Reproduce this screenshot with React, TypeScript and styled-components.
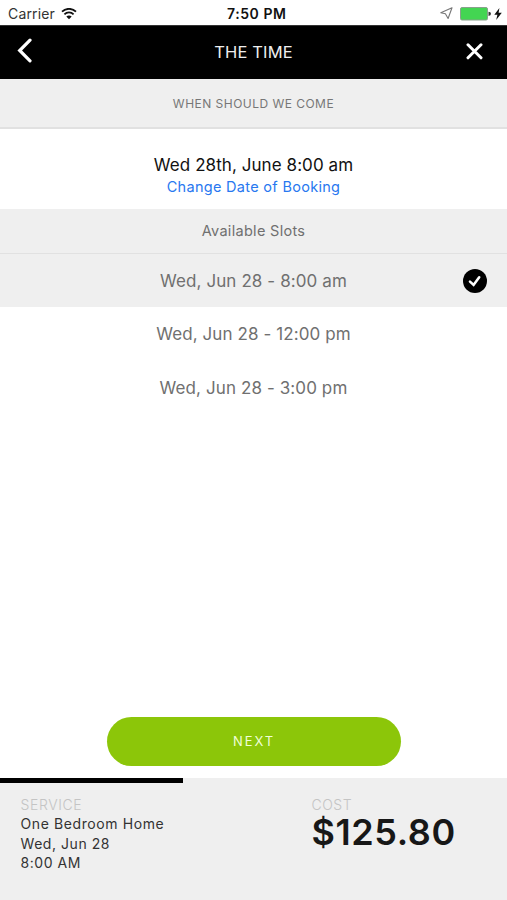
import React from "react";
import styled, { createGlobalStyle } from "styled-components";

const GlobalStyle = createGlobalStyle`
  * { box-sizing: border-box; }
  body { margin: 0; background: #fff; font-family: Inter, "Liberation Sans", sans-serif; }
`;

const Screen = styled.div`
  width: 507px;
  height: 900px;
  display: flex;
  flex-direction: column;
  overflow: hidden;
  background: #fff;
`;

const Text = styled.span<{ $size: number; $track?: number; $color?: string; $weight?: number; $line?: number }>`
  font-size: ${(p) => p.$size}px;
  letter-spacing: ${(p) => p.$track ?? 0}px;
  color: ${(p) => p.$color ?? "#111"};
  font-weight: ${(p) => p.$weight ?? 400};
  line-height: ${(p) => (p.$line ? `${p.$line}px` : "normal")};
  white-space: nowrap;
`;

const StatusBar = styled.header`
  height: 25px;
  padding: 2px 5px 0 8px;
  display: grid;
  grid-template-columns: 219px 1fr 180px;
  align-items: center;
`;

const StatusGroup = styled.div<{ $end?: boolean }>`
  display: flex;
  align-items: center;
  gap: 6px;
  justify-content: ${(p) => (p.$end ? "flex-end" : "flex-start")};
`;

const NavBar = styled.nav`
  height: 54px;
  background: #000;
  border-top: 1px solid #333;
  padding: 0 24px 1px 17px;
  display: grid;
  grid-template-columns: 60px 1fr 53px;
  align-items: center;
  text-align: center;
`;

const IconButton = styled.button<{ $end?: boolean }>`
  display: flex;
  justify-content: ${(p) => (p.$end ? "flex-end" : "flex-start")};
  padding: 0 0 ${(p) => (p.$end ? 2 : 4)}px;
  border: 0;
  background: none;
`;

const Heading = styled.div<{ $height: number; $rule: number; $shift?: number }>`
  height: ${(p) => p.$height}px;
  padding-bottom: ${(p) => p.$shift ?? 0}px;
  background: #efefef;
  border-bottom: ${(p) => p.$rule}px solid #e1e1e1;
  display: flex;
  align-items: center;
  justify-content: center;
`;

const Booking = styled.section`
  height: 80px;
  padding-top: 25px;
  display: flex;
  flex-direction: column;
  align-items: center;
`;

const SlotRow = styled.div<{ $selected?: boolean }>`
  height: ${(p) => (p.$selected ? 53 : 54)}px;
  padding: 0 19px;
  display: grid;
  grid-template-columns: 26px 1fr 26px;
  align-items: center;
  text-align: center;
  background: ${(p) => (p.$selected ? "#efefef" : "#fff")};
`;

const Actions = styled.div`
  margin-top: auto;
  padding-bottom: 12px;
  display: flex;
  justify-content: center;
`;

const NextButton = styled.button`
  width: 294px;
  height: 49px;
  border: 0;
  border-radius: 25px;
  padding: 0 0 1px 1px;
  background: #8cc609;
  font-family: inherit;
`;

const Footer = styled.footer`
  height: 122px;
  background: #efefef;
`;

const Progress = styled.div`
  width: 183px;
  height: 5px;
  background: #000;
`;

const Summary = styled.div`
  padding: 12px 20.5px 0;
  display: grid;
  grid-template-columns: 291px 1fr;
`;

const SummaryColumn = styled.div`
  display: flex;
  flex-direction: column;
`;

const slots = ["Wed, Jun 28 - 8:00 am", "Wed, Jun 28 - 12:00 pm", "Wed, Jun 28 - 3:00 pm"];

const Wifi = () => (
  <svg width="16" height="12" viewBox="0 0 16 12" fill="none" stroke="#111" strokeWidth="1.8">
    <path d="M1 3.6C5 -.1 11 -.1 15 3.6M3.4 6.3C6 3.8 10 3.8 12.6 6.3" />
    <path d="M8 11.2L5.3 8.5Q8 6.5 10.7 8.5Z" fill="#111" stroke="none" />
  </svg>
);

const Location = () => (
  <svg width="13" height="13" viewBox="0 0 13 13" fill="none" stroke="#777" strokeWidth="1.1" strokeLinejoin="round">
    <path d="M12 .8L.8 5.8L5.4 6.8L8.1 11.5Z" />
  </svg>
);

const Battery = () => (
  <svg width="31" height="14" viewBox="0 0 31 14">
    <rect x=".5" y=".5" width="27" height="12.5" rx="1.5" fill="#43d552" stroke="#88a18b" />
    <path d="M28.5 4.7Q31 4.7 31 6.8Q31 8.9 28.5 8.9Z" fill="#333" />
  </svg>
);

const Bolt = () => (
  <svg width="8" height="12" viewBox="0 0 8 12">
    <path d="M5.4 0L.3 6.7H3.4L2.2 12L7.8 4.8H4.6Z" fill="#111" />
  </svg>
);

const EndIcons = styled(StatusGroup)`
  gap: 3px;
  & > svg:first-child { margin-right: 4px; }
`;

const Back = () => (
  <svg width="16" height="25" viewBox="0 0 16 25" fill="none" stroke="#fff" strokeWidth="3.2">
    <path d="M13 2.2L2.7 12.5L13 22.8" strokeLinecap="round" />
  </svg>
);

const Close = () => (
  <svg width="17" height="17" viewBox="0 0 17 17" stroke="#fff" strokeWidth="3" strokeLinecap="round">
    <path d="M2 1.8L15 14.8M15 1.8L2 14.8" />
  </svg>
);

const Check = () => (
  <svg width="26" height="26" viewBox="0 0 26 26">
    <circle cx="13" cy="13" r="12" fill="#000" />
    <path d="M8 13.6L11.6 16.9L17.2 9.3" fill="none" stroke="#fff" strokeWidth="2.6" strokeLinecap="round" />
  </svg>
);

export default function App() {
  return (
    <Screen>
      <GlobalStyle />
      <StatusBar>
        <StatusGroup>
          <Text $size={14} $track={0.15} $color="#333">Carrier</Text>
          <Wifi />
        </StatusGroup>
        <Text $size={14} $track={0.55} $weight={600}>7:50 PM</Text>
        <EndIcons $end>
          <Location />
          <Battery />
          <Bolt />
        </EndIcons>
      </StatusBar>
      <NavBar>
        <IconButton aria-label="Back"><Back /></IconButton>
        <Text $size={16.5} $track={0.15} $color="#eee">THE TIME</Text>
        <IconButton $end aria-label="Close"><Close /></IconButton>
      </NavBar>
      <Heading $height={50} $rule={2}>
        <Text $size={12} $track={0.47} $color="#777">WHEN SHOULD WE COME</Text>
      </Heading>
      <Booking>
        <Text $size={17} $track={0.07} $line={22}>Wed 28th, June 8:00 am</Text>
        <Text $size={14.5} $track={0.3} $line={21} $color="#2878f0">Change Date of Booking</Text>
      </Booking>
      <Heading $height={45} $rule={1} $shift={1}>
        <Text $size={14.5} $track={0.3} $color="#707070">Available Slots</Text>
      </Heading>
      {slots.map((slot, index) => (
        <SlotRow key={slot} $selected={index === 0}>
          <span />
          <Text $size={17} $track={0.1} $color="#707070">{slot}</Text>
          {index === 0 && <Check />}
        </SlotRow>
      ))}
      <Actions>
        <NextButton><Text $size={13} $track={1.9} $color="#f0ffd8">NEXT</Text></NextButton>
      </Actions>
      <Footer>
        <Progress />
        <Summary>
          <SummaryColumn>
            <Text $size={14} $track={0.6} $line={19} $color="#c4c4c4" $weight={300}>SERVICE</Text>
            <Text $size={14} $track={0.6} $line={19.5} $color="#333">One Bedroom Home</Text>
            <Text $size={14} $track={0.55} $line={19.5} $color="#333">Wed, Jun 28</Text>
            <Text $size={14} $track={0.55} $line={19.5} $color="#333">8:00 AM</Text>
          </SummaryColumn>
          <SummaryColumn>
            <Text $size={14} $track={0.5} $line={19} $color="#c4c4c4" $weight={300}>COST</Text>
            <Text $size={36} $track={0.6} $line={36} $color="#171717" $weight={600}>$125.80</Text>
          </SummaryColumn>
        </Summary>
      </Footer>
    </Screen>
  );
}
